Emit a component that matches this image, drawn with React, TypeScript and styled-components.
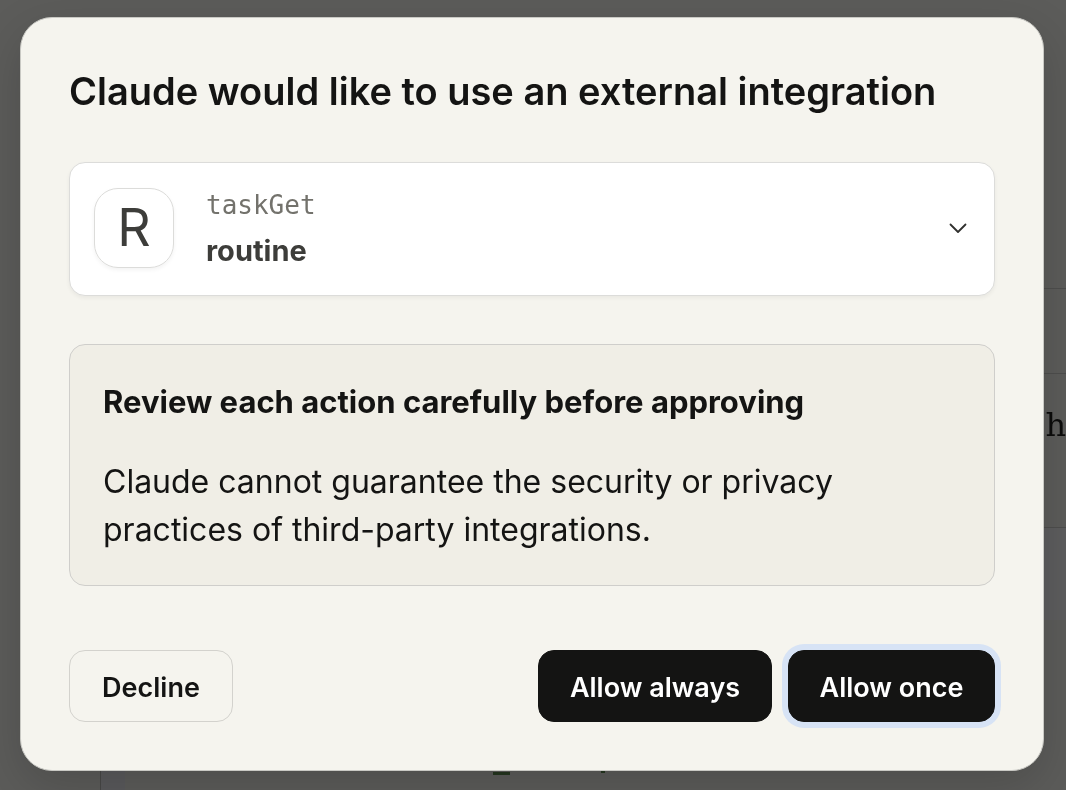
import React from "react";
import styled, { createGlobalStyle, css } from "styled-components";

const sans = `Inter, "Liberation Sans", sans-serif`;

const GlobalStyle = createGlobalStyle`
  *, *::before, *::after { box-sizing: border-box; }
  body {
    margin: 0;
    background: #5c5c5a;
    color: #141413;
    font-family: ${sans};
    overflow: hidden;
  }
  h2, h3, p { margin: 0; }
`;

/* Dimmed page behind the dialog */
const Page = styled.div`
  position: fixed;
  inset: 0;
  display: flex;
  justify-content: flex-end;
`;

const Feed = styled.div`
  flex: 1;
  margin-left: 100px;
  display: flex;
  flex-direction: column;
`;

const FeedRow = styled.div<{ $height: number }>`
  height: ${(p) => p.$height}px;
  flex: none;
  border-bottom: 1px solid #4e4e4d;
  display: flex;
  align-items: center;
  justify-content: flex-end;
  padding-bottom: 52px;
  font: 32px/48px "DejaVu Serif", serif;
  color: #0c0c0b;
`;

const FeedBand = styled.div`
  height: 92px;
  flex: none;
  background: #5d5d5e;
`;

const CodeBlock = styled.div`
  flex: 1;
  border-left: 1px solid #484847;
  background: linear-gradient(90deg, #5a5a5c 24px, #5c5c5a 24px);
  display: flex;
  align-items: flex-end;
  gap: 91px;
  padding: 0 0 15px 392px;
`;

const CodeMark = styled.span<{ $width: number }>`
  width: ${(p) => p.$width}px;
  height: 3px;
  margin-bottom: ${(p) => (p.$width < 10 ? 2 : 0)}px;
  background: #25361f;
`;

const Overlay = styled.div`
  position: relative;
  padding: 17px 22px 19px 20px;
`;

const Dialog = styled.section`
  display: flex;
  flex-direction: column;
  padding: 48px;
  background: #f5f4ee;
  border: 1px solid #c9c9c4;
  border-radius: 32px;
  box-shadow: 0 16px 48px rgba(0, 0, 0, 0.16);
`;

const Title = styled.h2`
  font-size: 38px;
  line-height: 50px;
  font-weight: 600;
  white-space: nowrap;
`;

const ToolCard = styled.button`
  display: flex;
  align-items: center;
  gap: 32px;
  margin-top: 46px;
  padding: 24px 24px 26px;
  background: #fff;
  border: 1px solid #dcdcda;
  border-radius: 16px;
  box-shadow: 0 2px 4px rgba(0, 0, 0, 0.05);
  font-family: inherit;
  text-align: left;
  color: #3d3d3a;
`;

const Logo = styled.span`
  display: flex;
  align-items: center;
  justify-content: center;
  width: 80px;
  height: 80px;
  border: 1px solid #dcdcda;
  border-radius: 24px;
  box-shadow: 0 2px 4px rgba(0, 0, 0, 0.05);
  font-size: 52px;
  line-height: 80px;
`;

const ToolText = styled.span`
  flex: 1;
  display: flex;
  flex-direction: column;
  gap: 10px;
  line-height: 36px;
`;

const ToolName = styled.code`
  font-family: "DejaVu Sans Mono", monospace;
  font-size: 26px;
  color: #73726c;
`;

const ServerName = styled.span`
  font-size: 29px;
  font-weight: 700;
`;

const Notice = styled.div`
  display: flex;
  flex-direction: column;
  gap: 32px;
  margin-top: 48px;
  padding: 33px 33px 31px;
  background: #f0eee6;
  border: 1px solid #cfcecb;
  border-radius: 16px;
  font-size: 32px;
  line-height: 48px;
`;

const NoticeTitle = styled.h3`
  font-size: 31px;
  font-weight: 700;
`;

const NoticeText = styled.p`
  max-width: 780px;
`;

const Actions = styled.div`
  display: flex;
  gap: 16px;
  margin-top: 64px;
`;

const Button = styled.button<{ $solid?: boolean; $width: number }>`
  min-width: ${(p) => p.$width}px;
  height: 72px;
  padding: 4px 24px 0;
  border: 1px solid #d3d2cd;
  border-radius: 16px;
  background: transparent;
  color: #141413;
  font: 600 27px/40px ${sans};
  white-space: nowrap;

  ${(p) =>
    p.$solid &&
    css`
      border-color: #141413;
      background: #141413;
      color: #fff;
    `}

  &:first-child {
    margin-right: auto;
  }
  &:focus {
    outline: none;
    box-shadow: 0 0 0 6px #d7e3f5;
  }
`;

export default function App() {
  return (
    <>
      <GlobalStyle />
      <Page aria-hidden="true">
        <Feed>
          <FeedRow $height={289} />
          <FeedRow $height={85} />
          <FeedRow $height={154}>sh</FeedRow>
          <FeedBand />
          <CodeBlock>
            <CodeMark $width={17} />
            <CodeMark $width={4} />
          </CodeBlock>
        </Feed>
      </Page>
      <Overlay>
        <Dialog role="dialog" aria-modal="true" aria-labelledby="dialog-title">
          <Title id="dialog-title">Claude would like to use an external integration</Title>
          <ToolCard type="button" aria-expanded="false">
            <Logo>R</Logo>
            <ToolText>
              <ToolName>taskGet</ToolName>
              <ServerName>routine</ServerName>
            </ToolText>
            <svg width="24" height="24" viewBox="0 0 24 24" fill="none" stroke="#30302e" strokeWidth="1.8" strokeLinecap="round" strokeLinejoin="round">
              <path d="M4.5 8.5 12 16l7.5-7.5" />
            </svg>
          </ToolCard>
          <Notice>
            <NoticeTitle>Review each action carefully before approving</NoticeTitle>
            <NoticeText>
              Claude cannot guarantee the security or privacy practices of third-party integrations.
            </NoticeText>
          </Notice>
          <Actions>
            <Button type="button" $width={164}>Decline</Button>
            <Button type="button" $solid $width={234}>Allow always</Button>
            <Button type="button" $solid $width={207} autoFocus>Allow once</Button>
          </Actions>
        </Dialog>
      </Overlay>
    </>
  );
}
